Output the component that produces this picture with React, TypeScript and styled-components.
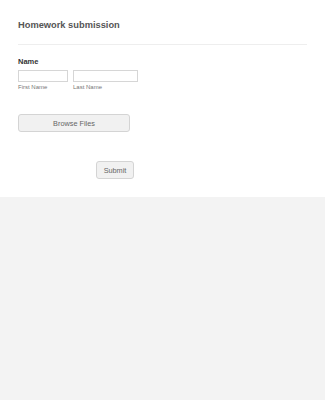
import styled, { createGlobalStyle } from "styled-components";

const GlobalStyle = createGlobalStyle`
  html, body {
    margin: 0;
    padding: 0;
    background: #f3f3f3;
    font-family: "Liberation Sans", Arial, sans-serif;
  }
`;

const Card = styled.form`
  background: #fff;
  height: 197px;
  padding: 18px 18px 0;
  box-sizing: border-box;
`;

const Title = styled.h1`
  margin: 0;
  font-size: 9.3px;
  line-height: 15px;
  font-weight: bold;
  color: #555;
`;

const Divider = styled.hr`
  margin: 11px 0 0;
  width: 289px;
  border: 0;
  border-top: 1px solid #eeeeee;
`;

const Label = styled.div`
  margin-top: 12px;
  font-size: 7.5px;
  line-height: 10px;
  font-weight: bold;
  color: #333;
`;

const NameRow = styled.div`
  display: flex;
  gap: 5px;
  margin-top: 3px;
`;

const Field = styled.div`
  display: flex;
  flex-direction: column;
`;

const Input = styled.input<{ $w: number }>`
  width: ${(p) => p.$w}px;
  height: 12px;
  box-sizing: border-box;
  border: 1px solid #d6d6d6;
  margin: 0;
  padding: 0;
  background: #fff;
`;

const SubLabel = styled.span`
  font-size: 6px;
  line-height: 8px;
  margin-top: 1px;
  color: #777;
`;

const Button = styled.button<{ $w: number }>`
  width: ${(p) => p.$w}px;
  height: 18px;
  box-sizing: border-box;
  border: 1px solid #d4d4d4;
  border-radius: 3px;
  background: #f1f1f1;
  color: #666;
  font-family: "Liberation Sans", Arial, sans-serif;
  font-size: 7.3px;
  padding: 0;
  display: block;
`;

const BrowseWrap = styled.div`
  margin-top: 23px;
`;

const SubmitWrap = styled.div`
  margin-top: 29px;
  padding-left: 78px;
`;

export default function App() {
  return (
    <>
      <GlobalStyle />
      <Card onSubmit={(e) => e.preventDefault()}>
        <Title>Homework submission</Title>
        <Divider />
        <Label>Name</Label>
        <NameRow>
          <Field>
            <Input $w={50} />
            <SubLabel>First Name</SubLabel>
          </Field>
          <Field>
            <Input $w={65} />
            <SubLabel>Last Name</SubLabel>
          </Field>
        </NameRow>
        <BrowseWrap>
          <Button type="button" $w={112}>Browse Files</Button>
        </BrowseWrap>
        <SubmitWrap>
          <Button type="submit" $w={38}>Submit</Button>
        </SubmitWrap>
      </Card>
    </>
  );
}
